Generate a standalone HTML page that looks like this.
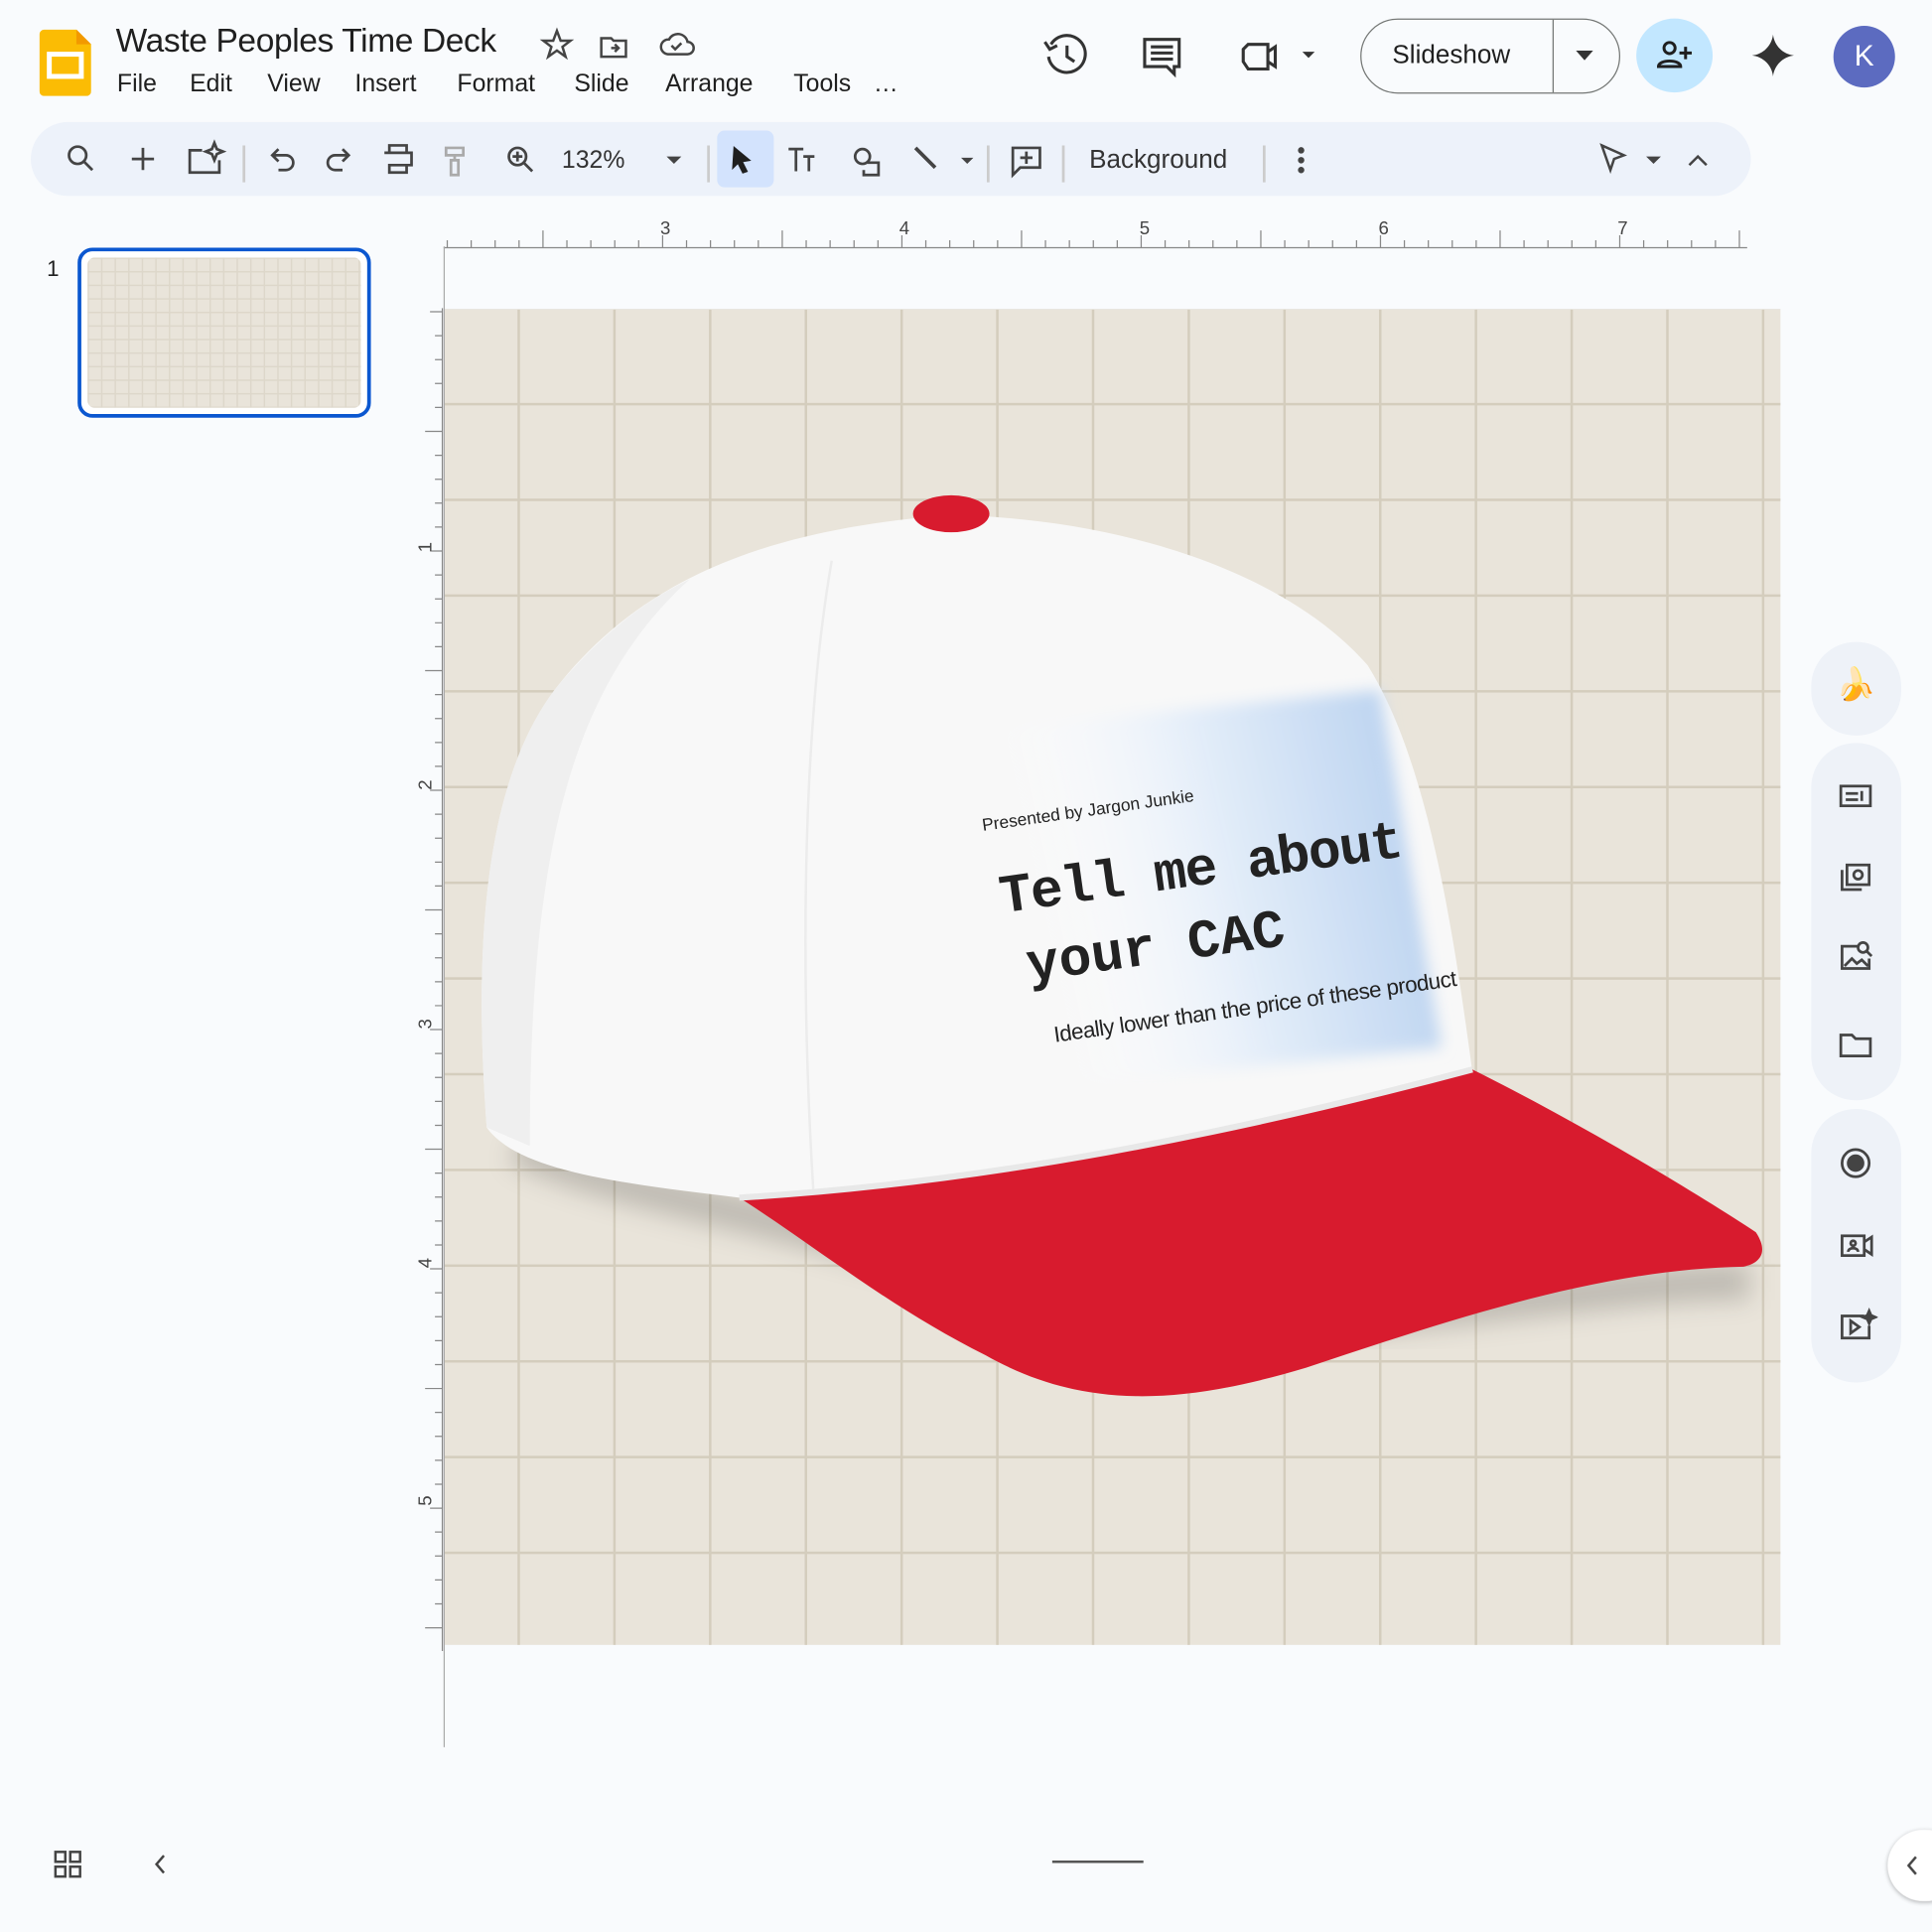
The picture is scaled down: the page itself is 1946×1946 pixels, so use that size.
<!DOCTYPE html>
<html><head><meta charset="utf-8"><style>
html,body{margin:0;padding:0;width:1946px;height:1946px;overflow:hidden;background:#f9fbfd;}
#s{position:absolute;left:0;top:0;width:1568px;height:1568px;transform:scale(1.24107);transform-origin:0 0;font-family:"Liberation Sans",sans-serif;color:#1f1f1f;}
.a{position:absolute;}
.m{position:absolute;top:57px;font-size:20px;}
</style></head><body><div id="s">
<svg class="a" style="left:32px;top:24px" width="42" height="54" viewBox="0 0 42 54"><path d="M4 0h26l12 12v38a4 4 0 0 1-4 4H4a4 4 0 0 1-4-4V4a4 4 0 0 1 4-4z" fill="#fbbc04"/><path d="M30 0l12 12H30z" fill="#f29900"/><rect x="8" y="20" width="26" height="18" fill="none" stroke="#fff" stroke-width="4"/></svg>
<div class="a" style="left:94px;top:18px;font-size:27px;letter-spacing:-0.3px">Waste Peoples Time Deck</div>
<svg class="a" style="left:438px;top:22px" width="130" height="28" fill="none" stroke="#444" stroke-width="2"><path d="M14 3l3 8h8l-6.5 5 2.5 8-7-5-7 5 2.5-8L3 11h8z"/><path d="M50 9h8l2 2h10v13H50z M58 17h6 M61 14l3 3-3 3"/><path d="M104 22h16a5 5 0 0 0 0-10a8 8 0 0 0-15-2a6 6 0 0 0-1 12z M107 15l3 3 5-5"/></svg>
<div class="m" style="left:95px">File</div><div class="m" style="left:154px">Edit</div><div class="m" style="left:217px">View</div><div class="m" style="left:288px">Insert</div><div class="m" style="left:371px">Format</div><div class="m" style="left:466px">Slide</div><div class="m" style="left:540px">Arrange</div><div class="m" style="left:644px">Tools</div><div class="m" style="left:709px">…</div>
<svg class="a" style="left:845px;top:26px" width="240" height="40" fill="none" stroke="#333" stroke-width="2.5"><path d="M8 10a15 15 0 1 1-2 10 M3 8l4 6 6-3 M21 11v9l6 4"/><path d="M84 6h28v22h-4v6l-6-6H84z M89 12h18 M89 17h18 M89 22h18" /><path d="M168 10h16v20h-16l-4-6V14z M184 16l6-4v16l-6-4"/><path d="M212 16l5 5 5-5z" fill="#333" stroke="none"/></svg>
<div class="a" style="left:1104px;top:15px;width:211px;height:61px;border:1.5px solid #747775;border-radius:31px;box-sizing:border-box"></div>
<div class="a" style="left:1260px;top:16px;width:1px;height:59px;background:#747775"></div>
<div class="a" style="left:1130px;top:33px;font-size:21px">Slideshow</div>
<svg class="a" style="left:1279px;top:41px" width="14" height="8"><path d="M0 0h14L7 8z" fill="#333"/></svg>
<div class="a" style="left:1328px;top:15px;width:62px;height:60px;border-radius:50%;background:#c2e7ff"></div>
<svg class="a" style="left:1344px;top:32px" width="32" height="26" fill="none" stroke="#1f1f1f" stroke-width="2.4"><circle cx="11" cy="7" r="4.5"/><path d="M2 22c0-6 18-6 18 0z M24 6v10 M19 11h10"/></svg>
<svg class="a" style="left:1422px;top:28px" width="34" height="34"><path d="M17 0C18 9 25 16 34 17 25 18 18 25 17 34 16 25 9 18 0 17 9 16 16 9 17 0z" fill="#333"/></svg>
<div class="a" style="left:1488px;top:21px;width:50px;height:50px;border-radius:50%;background:#5c6bc0;color:#fff;font-size:24px;text-align:center;line-height:50px">K</div>
<div class="a" style="left:25px;top:99px;width:1396px;height:60px;border-radius:30px;background:#edf2fa"></div>
<div class="a" style="left:582px;top:106px;width:46px;height:46px;border-radius:6px;background:#d3e3fd"></div>
<svg class="a" style="left:40px;top:110px" width="1060" height="40" fill="none" stroke="#444" stroke-width="2.2">
<circle cx="23" cy="16" r="7"/><path d="M28 21l7 7"/>
<path d="M76 10v18 M67 19h18"/>
<path d="M124 12h-10v18h24v-10 M134 6l2 5 5 2-5 2-2 5-2-5-5-2 5-2z"/>
<path d="M158 8v30" stroke="#ccc"/>
<path d="M182 16h10a6 6 0 0 1 0 12h-6 M186 11l-5 5 5 5"/>
<path d="M242 16h-10a6 6 0 0 0 0 12h6 M238 11l5 5-5 5"/>
<path d="M276 14V8h14v6 M272 14h22v10h-4 M276 24v6h14v-6z"/>
<path d="M322 10h14v6h-14z M329 16v4 M326 20h6v12h-6z" stroke="#aaa"/>
<circle cx="380" cy="17" r="7"/><path d="M385 22l7 7 M380 13v8 M376 17h8"/>
<path d="M535 8v30 M762 8v30 M823 8v30 M986 8v30" stroke="#ccc"/>
<path d="M556 10l12 10-6 1 4 8-3 1-4-8-4 4z" fill="#1f1f1f" stroke="#1f1f1f" stroke-width="1.5"/>
<path d="M600 11h12 M606 11v18 M612 17h9 M616.5 17v12"/>
<circle cx="660" cy="17" r="6"/><path d="M664 22h9v10h-12v-4"/>
<path d="M703 10l16 16" stroke-width="3"/>
<path d="M740 18h10l-5 5z" fill="#444" stroke="none"/>
<path d="M782 10h22v16h-16l-6 6z M793 13v10 M788 18h10"/>
<circle cx="1016" cy="12" r="1.5" fill="#444"/><circle cx="1016" cy="20" r="1.5" fill="#444"/><circle cx="1016" cy="28" r="1.5" fill="#444"/>
<path d="M501 17h12l-6 6z" fill="#444" stroke="none"/>
</svg>
<div class="a" style="left:456px;top:119px;font-size:20px;color:#333">132%</div>
<div class="a" style="left:884px;top:118px;font-size:21px;color:#333">Background</div>
<svg class="a" style="left:1296px;top:114px" width="100" height="30" fill="none" stroke="#444" stroke-width="2"><path d="M4 4l18 8-8 3-3 9z"/><path d="M40 13h12l-6 6z" fill="#444" stroke="none"/><path d="M75 20l7-7 7 7"/></svg>
<svg class="a" style="left:355px;top:170px" width="1070" height="40">
<line x1="5" y1="31" x2="1063" y2="31" stroke="#888"/>
<g stroke="#888" id="rt"></g>
<text x="185" y="20" font-size="15" fill="#444" text-anchor="middle">3</text><text x="379" y="20" font-size="15" fill="#444" text-anchor="middle">4</text><text x="574" y="20" font-size="15" fill="#444" text-anchor="middle">5</text><text x="768" y="20" font-size="15" fill="#444" text-anchor="middle">6</text><text x="962" y="20" font-size="15" fill="#444" text-anchor="middle">7</text>
</svg>
<div class="a" style="left:360px;top:200px;width:1px;height:1218px;background:#aaa"></div>
<svg class="a" style="left:330px;top:250px" width="30" height="1090" id="lr"></svg>
<div class="a" style="left:38px;top:208px;font-size:18px">1</div>
<div class="a" style="left:63px;top:201px;width:238px;height:138px;border:3px solid #0b57d0;border-radius:12px;box-sizing:border-box;background:#fff"></div>
<div class="a" style="left:71px;top:209px;width:222px;height:122px;border-radius:6px;background:#e9e4da;background-image:linear-gradient(#ddd7ca 1px,transparent 1px),linear-gradient(90deg,#ddd7ca 1px,transparent 1px);background-size:11px 11px"></div>
<div class="a" style="left:361px;top:251px;width:1084px;height:1084px;background:#e9e4da;background-image:linear-gradient(#d4cdbd 2px,transparent 2px),linear-gradient(90deg,#d4cdbd 2px,transparent 2px);background-size:77.7px 77.7px;background-position:59px 76px"></div>
<svg class="a" style="left:361px;top:251px" width="1084" height="1084" viewBox="361 251 1084 1084">
<defs>
<linearGradient id="bl" x1="0" y1="0.2" x2="1" y2="0"><stop offset="0" stop-color="#fff" stop-opacity="0"/><stop offset="0.45" stop-color="#e3edf9"/><stop offset="1" stop-color="#b2cdee"/></linearGradient>
<filter id="sh"><feGaussianBlur stdDeviation="10"/></filter>
<filter id="bf"><feGaussianBlur stdDeviation="6"/></filter>
</defs>
<path d="M420 930 C520 980 700 990 900 1080 C1100 1080 1300 1040 1420 1040" fill="none" stroke="#000" stroke-opacity="0.18" stroke-width="30" filter="url(#sh)"/>
<path d="M395 915 C385 780 390 640 450 560 C520 470 620 430 770 418 C900 420 1040 460 1110 540 C1160 620 1180 760 1195 870 C1000 920 800 960 600 972 C500 960 420 950 395 915z" fill="#f8f8f8"/>
<path d="M395 915 C385 780 390 640 450 560 C500 500 540 480 560 470 C460 560 430 700 430 930z" fill="#efefef"/>
<path d="M675 455 C650 600 650 800 660 965" stroke="#ececec" stroke-width="2" fill="none"/>
<path d="M810 590 L1120 560 L1170 850 L830 885 Z" fill="url(#bl)" filter="url(#bf)"/>
<path d="M600 972 C800 960 1000 920 1195 868 C1280 910 1380 970 1425 1000 C1435 1015 1430 1025 1415 1028 C1300 1030 1180 1070 1060 1110 C960 1140 880 1145 800 1100 C720 1060 660 1010 600 972z" fill="#d81b2e"/>
<path d="M600 972 C800 960 1000 920 1195 868" stroke="#e8e8e8" stroke-width="5" fill="none"/>
<ellipse cx="772" cy="417" rx="31" ry="15" fill="#d81b2e"/>
<g transform="rotate(-8 990 720)" fill="#222">
<text x="806" y="648" font-size="14" font-family="Liberation Sans">Presented by Jargon Junkie</text>
<text x="812" y="716" font-size="44" font-weight="bold" font-family="Liberation Mono" textLength="330">Tell me about</text>
<text x="826" y="774" font-size="44" font-weight="bold" font-family="Liberation Mono">your CAC</text>
<text x="840" y="826" font-size="18" font-family="Liberation Sans" textLength="330">Ideally lower than the price of these product</text>
</g>
</svg>
<div class="a" style="left:1470px;top:521px;width:73px;height:76px;border-radius:36px;background:#eef2f8"></div>
<div class="a" style="left:1470px;top:603px;width:73px;height:290px;border-radius:36px;background:#eef2f8"></div>
<div class="a" style="left:1470px;top:900px;width:73px;height:222px;border-radius:36px;background:#eef2f8"></div>
<div class="a" style="left:1490px;top:540px;font-size:26px">🍌</div>
<svg class="a" style="left:1490px;top:630px" width="34" height="470" fill="none" stroke="#444" stroke-width="2.2">
<rect x="4" y="8" width="24" height="16"/><path d="M8 14h10 M8 19h10 M21 12v8" />
<rect x="9" y="72" width="18" height="16"/><circle cx="18" cy="80" r="3.5"/><path d="M5 76v16h16"/>
<path d="M18 138H5v18h22v-8 M7 154l6-6 4 4 4-3 5 5"/><circle cx="22" cy="139" r="4"/><path d="M25 142l4 4"/>
<path d="M4 210h9l3 3h12v14H4z"/>
<circle cx="16" cy="314" r="11"/><circle cx="16" cy="314" r="6" fill="#444"/>
<rect x="5" y="373" width="18" height="16"/><path d="M23 378l6-4v14l-6-4 M10 386c0-4 8-4 8 0"/><circle cx="14" cy="379" r="2"/>
<path d="M23 438H5v18h22v-10 M12 442v10l7-5z"/><path d="M27 434l1.5 3.5 3.5 1.5-3.5 1.5-1.5 3.5-1.5-3.5-3.5-1.5 3.5-1.5z" fill="#444"/>
</svg>
<svg class="a" style="left:42px;top:1500px" width="100" height="26" fill="none" stroke="#444" stroke-width="2"><rect x="3" y="3" width="8" height="8"/><rect x="15" y="3" width="8" height="8"/><rect x="3" y="15" width="8" height="8"/><rect x="15" y="15" width="8" height="8"/><path d="M91 6l-6 7 6 7"/></svg>
<div class="a" style="left:854px;top:1510px;width:74px;height:2px;background:#555"></div>
<div class="a" style="left:1532px;top:1485px;width:60px;height:58px;border-radius:29px;background:#fff;box-shadow:0 1px 4px rgba(0,0,0,.3)"></div>
<svg class="a" style="left:1544px;top:1505px" width="14" height="18" fill="none" stroke="#444" stroke-width="2"><path d="M11 2l-6 7 6 7"/></svg>
</div>
<script>
var g=document.getElementById('rt'),h='';
for(var i=0;i<=54;i++){var x=8+i*19.42;var len=6;if((i-4)%10==0)len=14;else if((i-4)%5==0)len=10;h+='<line x1="'+x+'" y1="31" x2="'+x+'" y2="'+(31-len)+'"/>';}
g.innerHTML=h;
var l=document.getElementById('lr'),t='<line x1="29" y1="0" x2="29" y2="1090" stroke="#888"/>';
for(var j=0;j<56;j++){var y=3+j*19.42;var ln=(j%5==0)?14:6;if(j%10==0)ln=10;t+='<line x1="29" y1="'+y+'" x2="'+(29-ln)+'" y2="'+y+'" stroke="#888"/>';}
[[1,194],[2,387],[3,581],[4,775],[5,968]].forEach(function(n){t+='<text transform="translate(20 '+n[1]+') rotate(-90)" font-size="15" fill="#444" text-anchor="middle">'+n[0]+'</text>';});
l.innerHTML=t;
</script>
</body></html>
